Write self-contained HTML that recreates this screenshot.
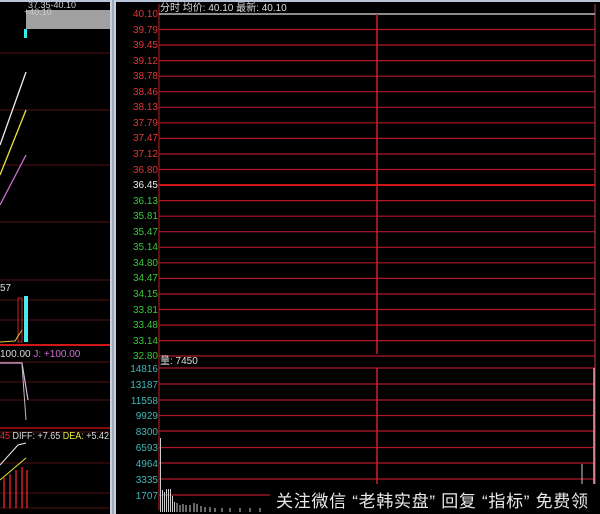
<!DOCTYPE html>
<html><head><meta charset="utf-8"><style>
html,body{margin:0;padding:0;background:#000;width:600px;height:514px;overflow:hidden}
svg{display:block}
text{font-family:"Liberation Sans","Noto Sans CJK SC",sans-serif}
</style></head><body>
<svg width="600" height="514" viewBox="0 0 600 514" xmlns="http://www.w3.org/2000/svg">
<rect width="600" height="514" fill="#000"/>
<rect x="0" y="0" width="600" height="2" fill="#b8c4d8"/>
<rect x="110" y="0" width="6" height="514" fill="#c8d0dc"/>
<rect x="112" y="0" width="2" height="514" fill="#9aa8bc"/>
<!-- LEFT PANEL -->
<text x="28" y="8" fill="#ccc" font-size="9">37.35-40.10</text>
<rect x="26" y="10" width="84" height="19" fill="#a0a0a0"/>
<text x="24" y="15" fill="#ccc" font-size="9">+40.10</text>
<rect x="24" y="29" width="3" height="9" fill="#3ee"/>
<g stroke="#501010" stroke-width="1">
<line x1="0" y1="53" x2="110" y2="53"/><line x1="0" y1="110" x2="110" y2="110"/>
<line x1="0" y1="165" x2="110" y2="165"/><line x1="0" y1="222" x2="110" y2="222"/>
<line x1="0" y1="280" x2="110" y2="280"/><line x1="0" y1="300" x2="110" y2="300"/>
<line x1="0" y1="320" x2="110" y2="320"/><line x1="0" y1="362" x2="110" y2="362"/>
<line x1="0" y1="382" x2="110" y2="382"/><line x1="0" y1="400" x2="110" y2="400"/>
<line x1="0" y1="432" x2="110" y2="432"/><line x1="0" y1="463" x2="110" y2="463"/>
<line x1="0" y1="493" x2="110" y2="493"/><line x1="0" y1="508" x2="110" y2="508"/>
</g>
<line x1="0" y1="345" x2="110" y2="345" stroke="#d01818" stroke-width="2"/>
<line x1="0" y1="428" x2="110" y2="428" stroke="#b01010" stroke-width="1.5"/>
<polyline points="0,145 26,72" stroke="#eee" stroke-width="1.3" fill="none"/>
<polyline points="0,175 26,110" stroke="#e8e840" stroke-width="1.3" fill="none"/>
<polyline points="0,205 26,155" stroke="#d070d0" stroke-width="1.3" fill="none"/>
<text x="0" y="291" fill="#ddd" font-size="10">57</text>
<rect x="18" y="298" width="4" height="44" fill="none" stroke="#d02020"/>
<rect x="24" y="296" width="4" height="46" fill="#4ee"/>
<polyline points="0,342 15,341 22,330" stroke="#e8c040" fill="none"/>
<text x="0" y="357" fill="#ddd" font-size="10">100.00 <tspan fill="#d070d0">J: +100.00</tspan></text>
<polyline points="0,363 22,363 28,400" stroke="#e0b0e0" stroke-width="1.2" fill="none"/>
<polyline points="22,365 26,420" stroke="#bbb" fill="none"/>
<text x="0" y="439" fill="#e03030" font-size="10" textLength="109" lengthAdjust="spacingAndGlyphs">45 <tspan fill="#ddd">DIFF: +7.65 </tspan><tspan fill="#e8e840">DEA: </tspan><tspan fill="#ddd">+5.42</tspan></text>
<polyline points="0,465 18,445 26,443" stroke="#eee" fill="none"/>
<polyline points="0,480 26,458" stroke="#e8e840" fill="none"/>
<g stroke="#d02020" stroke-width="1.5">
<line x1="4" y1="478" x2="4" y2="508"/><line x1="10" y1="474" x2="10" y2="508"/>
<line x1="16" y1="470" x2="16" y2="508"/><line x1="22" y1="467" x2="22" y2="508"/>
<line x1="27" y1="470" x2="27" y2="508"/>
</g>
<!-- RIGHT PANEL -->
<text x="160" y="11" fill="#ddd" font-size="10">分时 均价: 40.10 最新: 40.10</text>
<line x1="159" y1="4" x2="159" y2="510" stroke="#c02020"/>
<line x1="595" y1="4" x2="595" y2="514" stroke="#c04050"/>
<g stroke="#b01828" stroke-width="1.2">
<line x1="159" y1="29.5" x2="595" y2="29.5"/><line x1="159" y1="45" x2="595" y2="45"/>
<line x1="159" y1="60.6" x2="595" y2="60.6"/><line x1="159" y1="76.2" x2="595" y2="76.2"/>
<line x1="159" y1="91.7" x2="595" y2="91.7"/><line x1="159" y1="107.3" x2="595" y2="107.3"/>
<line x1="159" y1="122.8" x2="595" y2="122.8"/><line x1="159" y1="138.4" x2="595" y2="138.4"/>
<line x1="159" y1="154" x2="595" y2="154"/><line x1="159" y1="169.5" x2="595" y2="169.5"/>
<line x1="159" y1="200.6" x2="595" y2="200.6"/><line x1="159" y1="216.2" x2="595" y2="216.2"/>
<line x1="159" y1="231.7" x2="595" y2="231.7"/><line x1="159" y1="247.3" x2="595" y2="247.3"/>
<line x1="159" y1="262.8" x2="595" y2="262.8"/><line x1="159" y1="278.4" x2="595" y2="278.4"/>
<line x1="159" y1="294" x2="595" y2="294"/><line x1="159" y1="309.5" x2="595" y2="309.5"/>
<line x1="159" y1="325.1" x2="595" y2="325.1"/><line x1="159" y1="340.6" x2="595" y2="340.6"/>
<line x1="159" y1="356" x2="595" y2="356"/>
<line x1="159" y1="368" x2="595" y2="368"/><line x1="159" y1="384" x2="595" y2="384"/>
<line x1="159" y1="400" x2="595" y2="400"/><line x1="159" y1="415.5" x2="595" y2="415.5"/>
<line x1="159" y1="431" x2="595" y2="431"/><line x1="159" y1="447.5" x2="595" y2="447.5"/>
<line x1="159" y1="463" x2="595" y2="463"/><line x1="159" y1="479" x2="595" y2="479"/>
<line x1="159" y1="495" x2="595" y2="495"/>
</g>
<line x1="159" y1="14" x2="595" y2="14" stroke="#bbb" stroke-width="1.5"/>
<line x1="159" y1="185" x2="595" y2="185" stroke="#d01818" stroke-width="2"/>
<line x1="377" y1="14" x2="377" y2="354" stroke="#d02020" stroke-width="1.5"/>
<line x1="377" y1="368" x2="377" y2="485" stroke="#d02020" stroke-width="1.5"/>
<g font-size="10" text-anchor="end">
<g fill="#e03838">
<text x="158" y="17">40.10</text><text x="158" y="33">39.79</text><text x="158" y="48">39.45</text>
<text x="158" y="64">39.12</text><text x="158" y="79">38.78</text><text x="158" y="95">38.46</text>
<text x="158" y="110">38.13</text><text x="158" y="126">37.79</text><text x="158" y="141">37.47</text>
<text x="158" y="157">37.12</text><text x="158" y="173">36.80</text>
</g>
<text x="158" y="188" fill="#eee">36.45</text>
<g fill="#38c838">
<text x="158" y="204">36.13</text><text x="158" y="219">35.81</text><text x="158" y="235">35.47</text>
<text x="158" y="250">35.14</text><text x="158" y="266">34.80</text><text x="158" y="281">34.47</text>
<text x="158" y="297">34.15</text><text x="158" y="313">33.81</text><text x="158" y="328">33.48</text>
<text x="158" y="344">33.14</text><text x="158" y="359">32.80</text>
</g>
<g fill="#40b8b8">
<text x="158" y="372">14816</text><text x="158" y="388">13187</text><text x="158" y="404">11558</text>
<text x="158" y="419">9929</text><text x="158" y="435">8300</text><text x="158" y="451">6593</text>
<text x="158" y="467">4964</text><text x="158" y="483">3335</text><text x="158" y="499">1707</text>
</g>
</g>
<text x="160" y="364" fill="#ddd" font-size="10">量: 7450</text>
<g stroke="#ccc" stroke-width="1">
<line x1="160.5" y1="438" x2="160.5" y2="512"/><line x1="162.5" y1="490" x2="162.5" y2="512"/>
<line x1="164.5" y1="492" x2="164.5" y2="512"/><line x1="166.5" y1="489" x2="166.5" y2="512"/>
<line x1="168.5" y1="489" x2="168.5" y2="512"/><line x1="170.5" y1="489" x2="170.5" y2="512"/>
<line x1="172.5" y1="496" x2="172.5" y2="512"/><line x1="174.5" y1="502" x2="174.5" y2="512"/>
<line x1="177" y1="503" x2="177" y2="512"/><line x1="180" y1="505" x2="180" y2="512"/>
<line x1="183" y1="504" x2="183" y2="512"/><line x1="186" y1="505" x2="186" y2="512"/>
<line x1="190" y1="505" x2="190" y2="512"/><line x1="194" y1="503" x2="194" y2="512"/>
<line x1="197" y1="504" x2="197" y2="512"/><line x1="201" y1="506" x2="201" y2="512"/>
<line x1="205" y1="507" x2="205" y2="512"/><line x1="210" y1="507" x2="210" y2="512"/>
<line x1="215" y1="508" x2="215" y2="512"/><line x1="222" y1="508" x2="222" y2="512"/>
<line x1="230" y1="508" x2="230" y2="512"/><line x1="240" y1="508" x2="240" y2="512"/>
<line x1="250" y1="508" x2="250" y2="512"/><line x1="260" y1="508" x2="260" y2="512"/>
<line x1="582" y1="464" x2="582" y2="485"/>
</g>
<line x1="594" y1="368" x2="594" y2="485" stroke="#e0a0a0" stroke-width="1.5"/>
<rect x="270" y="484" width="330" height="30" fill="#000"/>
<text x="276" y="507" fill="#e8e8e8" font-size="17" font-family="Noto Sans CJK SC, sans-serif" textLength="312" lengthAdjust="spacing">关注微信 “老韩实盘” 回复 “指标” 免费领</text>
</svg>
</body></html>
